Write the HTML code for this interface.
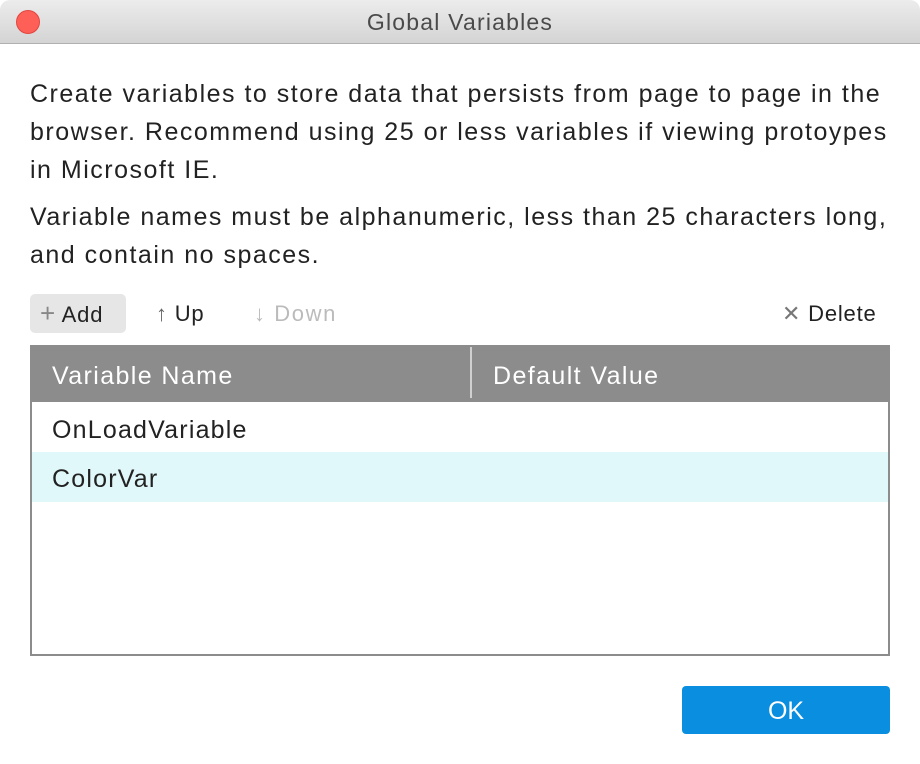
<!DOCTYPE html>
<html><head><style>
*{margin:0;padding:0;box-sizing:border-box}
body{width:920px;height:764px;background:#fff;font-family:"Liberation Sans",sans-serif;position:relative;overflow:hidden;color:#222}
.title{position:absolute;left:0;top:0;width:920px;height:44px;background:linear-gradient(#ececec,#d4d4d4);border-bottom:1px solid #b0b0b0;border-radius:10px 10px 0 0}
.title .dot{position:absolute;left:16px;top:10px;width:24px;height:24px;border-radius:50%;background:#fe5f57;border:1px solid #e2463f}
.title .t{position:absolute;left:0;right:0;top:9px;text-align:center;font-size:23px;color:#4a4a4a;letter-spacing:1.2px}
.p{position:absolute;left:30px;width:880px;font-size:25px;letter-spacing:1.5px;line-height:38px;color:#222;white-space:nowrap}
.tb{position:absolute;top:294px;height:39px;font-size:22px;line-height:39px;letter-spacing:0.8px;white-space:nowrap}
.table{position:absolute;left:30px;top:345px;width:860px;height:311px;border:2px solid #8c8c8c;border-top:none}
.hd{height:57px;background:#8c8c8c;color:#fff;font-size:25px;letter-spacing:1.4px;position:relative}
.hd span{position:absolute;top:17px}
.row{height:50px;font-size:25px;letter-spacing:1.2px;line-height:56px;padding-left:20px}
</style></head><body>
<div class="title"><div class="dot"></div><div class="t">Global Variables</div></div>
<div class="p" style="top:75px">Create variables to store data that persists from page to page in the<br>browser. Recommend using 25 or less variables if viewing protoypes<br>in Microsoft IE.</div>
<div class="p" style="top:198px">Variable names must be alphanumeric, less than 25 characters long,<br>and contain no spaces.</div>
<div class="tb" style="left:30px;width:96px;background:#e6e6e6;border-radius:5px;padding-left:10px"><span style="color:#888;font-size:26px">+</span> Add</div>
<div class="tb" style="left:156px"><span style="color:#666">↑</span> Up</div>
<div class="tb" style="left:254px;color:#bbb;letter-spacing:1.6px">↓ Down</div>
<div class="tb" style="left:782px"><span style="color:#777">✕</span> Delete</div>
<div class="table">
<div class="hd"><span style="left:20px">Variable Name</span><div style="position:absolute;left:438px;top:2px;width:2px;height:51px;background:#d0d0d0"></div><span style="left:461px">Default Value</span></div>
<div class="row">OnLoadVariable</div>
<div class="row" style="background:#e0f8f9;line-height:54px">ColorVar</div>
</div>
<div style="position:absolute;left:682px;top:686px;width:208px;height:48px;background:#0a8ee0;border-radius:4px;color:#fff;font-size:25px;line-height:50px;text-align:center">OK</div>
</body></html>
